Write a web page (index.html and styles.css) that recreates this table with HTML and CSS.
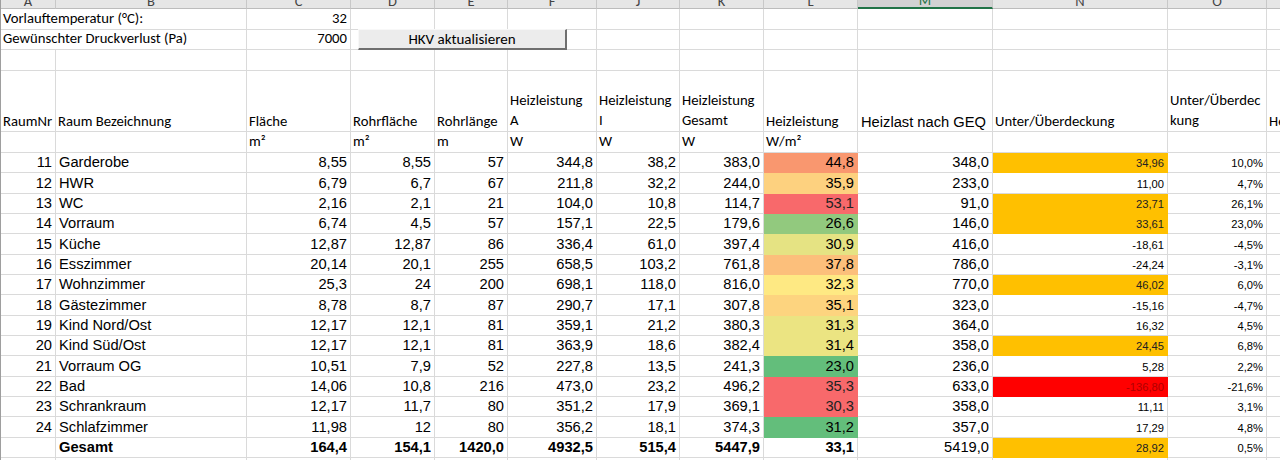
FILE: index.html
```html
<!DOCTYPE html>
<html lang="de">
<head>
<meta charset="utf-8">
<title>Heizkreisverteiler</title>
<link rel="stylesheet" href="styles.css">
</head>
<body>
<div class="sheet">
  <div class="row hdr">
    <div class="hc">A</div><div class="hc">B</div><div class="hc">C</div><div class="hc">D</div><div class="hc">E</div><div class="hc">F</div><div class="hc">J</div><div class="hc">K</div><div class="hc">L</div><div class="hc sel">M</div><div class="hc">N</div><div class="hc">O</div><div class="hc">P</div>
  </div>

  <div class="row h21">
    <div class="c cal span2">Vorlauftemperatur (°C):</div><div class="c cal r">32</div><div class="c"></div><div class="c"></div><div class="c"></div><div class="c"></div><div class="c"></div><div class="c"></div><div class="c"></div><div class="c"></div><div class="c"></div><div class="c"></div>
  </div>
  <div class="row h20">
    <div class="c cal span2">Gewünschter Druckverlust (Pa)</div><div class="c cal r">7000</div><div class="c"></div><div class="c"></div><div class="c"></div><div class="c"></div><div class="c"></div><div class="c"></div><div class="c"></div><div class="c"></div><div class="c"></div><div class="c"></div>
  </div>
  <div class="row h21">
    <div class="c"></div><div class="c"></div><div class="c"></div><div class="c"></div><div class="c"></div><div class="c"></div><div class="c"></div><div class="c"></div><div class="c"></div><div class="c"></div><div class="c"></div><div class="c"></div><div class="c"></div>
  </div>
  <div class="row h61 head">
    <div class="c cal">RaumNr</div><div class="c cal">Raum Bezeichnung</div><div class="c cal">Fläche</div><div class="c cal">Rohrfläche</div><div class="c cal">Rohrlänge</div><div class="c cal wrap">Heizleistung<br>A</div><div class="c cal wrap">Heizleistung<br>I</div><div class="c cal wrap">Heizleistung<br>Gesamt</div><div class="c cal">Heizleistung</div><div class="c">Heizlast nach GEQ</div><div class="c cal">Unter/Überdeckung</div><div class="c cal wrap">Unter/Überdec<br>kung</div><div class="c cal">Heizleistung</div>
  </div>
  <div class="row h21">
    <div class="c"></div><div class="c"></div><div class="c cal">m²</div><div class="c cal">m²</div><div class="c cal">m</div><div class="c cal">W</div><div class="c cal">W</div><div class="c cal">W</div><div class="c cal">W/m²</div><div class="c"></div><div class="c"></div><div class="c"></div><div class="c"></div>
  </div>

  <div class="row d"><div class="c r">11</div><div class="c">Garderobe</div><div class="c r">8,55</div><div class="c r">8,55</div><div class="c r">57</div><div class="c r">344,8</div><div class="c r">38,2</div><div class="c r">383,0</div><div class="c r fill s-448">44,8</div><div class="c r">348,0</div><div class="c r sm fill amber">34,96</div><div class="c r sm">10,0%</div><div class="c"></div></div>
  <div class="row d"><div class="c r">12</div><div class="c">HWR</div><div class="c r">6,79</div><div class="c r">6,7</div><div class="c r">67</div><div class="c r">211,8</div><div class="c r">32,2</div><div class="c r">244,0</div><div class="c r fill s-359">35,9</div><div class="c r">233,0</div><div class="c r sm">11,00</div><div class="c r sm">4,7%</div><div class="c"></div></div>
  <div class="row d"><div class="c r">13</div><div class="c">WC</div><div class="c r">2,16</div><div class="c r">2,1</div><div class="c r">21</div><div class="c r">104,0</div><div class="c r">10,8</div><div class="c r">114,7</div><div class="c r fill s-red">53,1</div><div class="c r">91,0</div><div class="c r sm fill amber">23,71</div><div class="c r sm">26,1%</div><div class="c"></div></div>
  <div class="row d"><div class="c r">14</div><div class="c">Vorraum</div><div class="c r">6,74</div><div class="c r">4,5</div><div class="c r">57</div><div class="c r">157,1</div><div class="c r">22,5</div><div class="c r">179,6</div><div class="c r fill s-266">26,6</div><div class="c r">146,0</div><div class="c r sm fill amber">33,61</div><div class="c r sm">23,0%</div><div class="c"></div></div>
  <div class="row d"><div class="c r">15</div><div class="c">Küche</div><div class="c r">12,87</div><div class="c r">12,87</div><div class="c r">86</div><div class="c r">336,4</div><div class="c r">61,0</div><div class="c r">397,4</div><div class="c r fill s-309">30,9</div><div class="c r">416,0</div><div class="c r sm">-18,61</div><div class="c r sm">-4,5%</div><div class="c"></div></div>
  <div class="row d"><div class="c r">16</div><div class="c">Esszimmer</div><div class="c r">20,14</div><div class="c r">20,1</div><div class="c r">255</div><div class="c r">658,5</div><div class="c r">103,2</div><div class="c r">761,8</div><div class="c r fill s-378">37,8</div><div class="c r">786,0</div><div class="c r sm">-24,24</div><div class="c r sm">-3,1%</div><div class="c"></div></div>
  <div class="row d"><div class="c r">17</div><div class="c">Wohnzimmer</div><div class="c r">25,3</div><div class="c r">24</div><div class="c r">200</div><div class="c r">698,1</div><div class="c r">118,0</div><div class="c r">816,0</div><div class="c r fill s-323">32,3</div><div class="c r">770,0</div><div class="c r sm fill amber">46,02</div><div class="c r sm">6,0%</div><div class="c"></div></div>
  <div class="row d"><div class="c r">18</div><div class="c">Gästezimmer</div><div class="c r">8,78</div><div class="c r">8,7</div><div class="c r">87</div><div class="c r">290,7</div><div class="c r">17,1</div><div class="c r">307,8</div><div class="c r fill s-351">35,1</div><div class="c r">323,0</div><div class="c r sm">-15,16</div><div class="c r sm">-4,7%</div><div class="c"></div></div>
  <div class="row d"><div class="c r">19</div><div class="c">Kind Nord/Ost</div><div class="c r">12,17</div><div class="c r">12,1</div><div class="c r">81</div><div class="c r">359,1</div><div class="c r">21,2</div><div class="c r">380,3</div><div class="c r fill s-313">31,3</div><div class="c r">364,0</div><div class="c r sm">16,32</div><div class="c r sm">4,5%</div><div class="c"></div></div>
  <div class="row d"><div class="c r">20</div><div class="c">Kind Süd/Ost</div><div class="c r">12,17</div><div class="c r">12,1</div><div class="c r">81</div><div class="c r">363,9</div><div class="c r">18,6</div><div class="c r">382,4</div><div class="c r fill s-313">31,4</div><div class="c r">358,0</div><div class="c r sm fill amber">24,45</div><div class="c r sm">6,8%</div><div class="c"></div></div>
  <div class="row d"><div class="c r">21</div><div class="c">Vorraum OG</div><div class="c r">10,51</div><div class="c r">7,9</div><div class="c r">52</div><div class="c r">227,8</div><div class="c r">13,5</div><div class="c r">241,3</div><div class="c r fill s-green">23,0</div><div class="c r">236,0</div><div class="c r sm">5,28</div><div class="c r sm">2,2%</div><div class="c"></div></div>
  <div class="row d"><div class="c r">22</div><div class="c">Bad</div><div class="c r">14,06</div><div class="c r">10,8</div><div class="c r">216</div><div class="c r">473,0</div><div class="c r">23,2</div><div class="c r">496,2</div><div class="c r fill s-red">35,3</div><div class="c r">633,0</div><div class="c r sm fill alarm">-136,80</div><div class="c r sm">-21,6%</div><div class="c"></div></div>
  <div class="row d"><div class="c r">23</div><div class="c">Schrankraum</div><div class="c r">12,17</div><div class="c r">11,7</div><div class="c r">80</div><div class="c r">351,2</div><div class="c r">17,9</div><div class="c r">369,1</div><div class="c r fill s-red">30,3</div><div class="c r">358,0</div><div class="c r sm">11,11</div><div class="c r sm">3,1%</div><div class="c"></div></div>
  <div class="row d"><div class="c r">24</div><div class="c">Schlafzimmer</div><div class="c r">11,98</div><div class="c r">12</div><div class="c r">80</div><div class="c r">356,2</div><div class="c r">18,1</div><div class="c r">374,3</div><div class="c r fill s-green">31,2</div><div class="c r">357,0</div><div class="c r sm">17,29</div><div class="c r sm">4,8%</div><div class="c"></div></div>
  <div class="row d total"><div class="c r"></div><div class="c b">Gesamt</div><div class="c r b">164,4</div><div class="c r b">154,1</div><div class="c r b">1420,0</div><div class="c r b">4932,5</div><div class="c r b">515,4</div><div class="c r b">5447,9</div><div class="c r b">33,1</div><div class="c r">5419,0</div><div class="c r sm fill amber">28,92</div><div class="c r sm">0,5%</div><div class="c"></div></div>
  <div class="row d"><div class="c"></div><div class="c"></div><div class="c"></div><div class="c"></div><div class="c"></div><div class="c"></div><div class="c"></div><div class="c"></div><div class="c"></div><div class="c"></div><div class="c"></div><div class="c"></div><div class="c"></div></div>

  <button class="macro-btn" type="button">HKV aktualisieren</button>
</div>
</body>
</html>
```
FILE: styles.css
```css
html, body {
  margin: 0;
  padding: 0;
  background: #ffffff;
  overflow: hidden;
}

.sheet {
  position: relative;
  width: max-content;
  border-left: 1px solid #9e9e9e;
}

.row {
  display: grid;
  grid-template-columns: 55px 191px 104px 84px 73px 89px 83px 84px 94px 135px 175px 99px 120px;
}

.hdr { height: 9px; }
.h20 { height: 20px; }
.h21 { height: 21px; }
.h61 { height: 61px; }
.d { height: 20.33px; }

.hc {
  box-sizing: border-box;
  display: flex;
  align-items: flex-end;
  justify-content: center;
  overflow: hidden;
  background: #e6e6e6;
  border-right: 1px solid #c8c8c8;
  border-bottom: 1px solid #bcbcbc;
  color: #444444;
  font-family: Calibri, Carlito, Lato, sans-serif;
  font-size: 14.5px;
  line-height: 13px;
}

.hc.sel {
  background: #d2d2d2;
  color: #217346;
  border-bottom: 2px solid #217346;
}

.c {
  box-sizing: border-box;
  display: flex;
  align-items: flex-end;
  overflow: hidden;
  white-space: nowrap;
  padding: 0 3px 2px 3px;
  border-right: 1px solid #dadada;
  border-bottom: 1px solid #dadada;
  font-family: Arial, "Liberation Sans", sans-serif;
  font-size: 14.7px;
  line-height: normal;
  color: #000000;
}

.cal {
  font-family: Calibri, Carlito, Lato, sans-serif;
  font-size: 14.7px;
  padding-left: 2px;
}

.span2 { grid-column: span 2; }

.r { justify-content: flex-end; }

.head .c { padding-bottom: 1px; }

.wrap {
  white-space: normal;
  line-height: 20px;
}

.sm { font-size: 11.2px; padding-bottom: 3px; }

.b { font-weight: bold; }

.fill { border-color: transparent; }

.amber { background: #ffc000; color: #222222; }
.alarm { background: #ff0000; color: #b00000; }

.s-448 { background: #f9976f; }
.s-359 { background: #fdd17f; }
.s-red { background: #f8696b; color: #222222; }
.s-266 { background: #92c97e; }
.s-309 { background: #e5e383; }
.s-378 { background: #fcbf7b; }
.s-323 { background: #fee983; }
.s-351 { background: #fdd47f; }
.s-313 { background: #ebe482; }
.s-green { background: #63be7b; }

.macro-btn {
  position: absolute;
  left: 357px;
  top: 29px;
  width: 209px;
  height: 21px;
  margin: 0;
  padding: 0;
  box-sizing: border-box;
  background: #ececec;
  border-top: 1px solid #f8f8f8;
  border-left: 1px solid #f8f8f8;
  border-right: 2px solid #6f6f6f;
  border-bottom: 2px solid #6f6f6f;
  font-family: Calibri, Carlito, Lato, sans-serif;
  font-size: 15px;
  line-height: 17px;
  color: #000000;
  text-align: center;
}
```
